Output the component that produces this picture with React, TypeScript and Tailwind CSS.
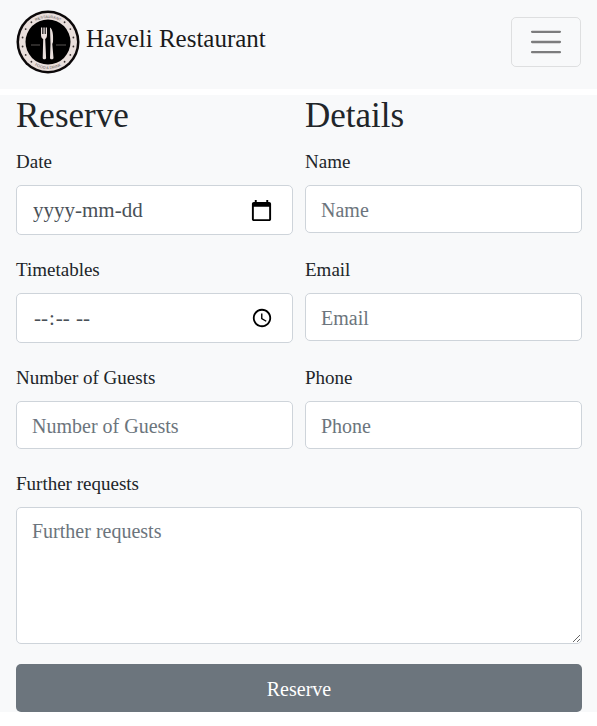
import type { ReactNode } from 'react';

const control =
  'w-full rounded-[5px] border border-[#ced4da] bg-white text-[#495057] placeholder:opacity-100';
const textControl = `${control} px-[15px] text-[20px] leading-[30px] placeholder:text-[#6c757d]`;
const pickerControl = `${control} h-[50px] px-4 text-[21px] leading-[30px] placeholder:text-[#495057]`;

function Logo() {
  const dots = [-50, -30, -10, 10, 30, 50].map((a) => (a * Math.PI) / 180);
  return (
    <svg viewBox="0 0 64 64" className="size-16 shrink-0" role="img" aria-label="Restaurant, food and drink">
      <defs>
        <path id="arc-top" d="M8 32a24 24 0 0 1 48 0" />
        <path id="arc-bottom" d="M5 32a27 27 0 0 0 54 0" />
      </defs>
      <circle cx="32" cy="32" r="31.5" fill="#0b0809" />
      <circle cx="32" cy="32" r="29" fill="#e9dfdc" />
      <circle cx="32" cy="32" r="22.5" fill="#000" />
      {dots.map((a) => (
        <g key={a} fill="#3a3433">
          <circle cx={32 + 25.8 * Math.cos(a)} cy={32 + 25.8 * Math.sin(a)} r="0.9" />
          <circle cx={32 - 25.8 * Math.cos(a)} cy={32 + 25.8 * Math.sin(a)} r="0.9" />
        </g>
      ))}
      <g fill="#5a5453" fontFamily="'Liberation Sans', Arial, sans-serif" fontSize="3.8" textAnchor="middle">
        <text>
          <textPath href="#arc-top" startOffset="50%">RESTAURANT</textPath>
        </text>
        <text>
          <textPath href="#arc-bottom" startOffset="50%">FOOD &amp; DRINK</textPath>
        </text>
      </g>
      <path d="M15 35h9M40 35h10" stroke="#5b5655" strokeWidth="1.2" />
      <g fill="#e9dfdc">
        <path d="M25 17.5H26V24H26.7V17.5H27.6V24H28.3V17.5H29.2V24H29.9V17.5H31V25C31 27.5 30 28.3 29.2 29L30.1 48C30.1 49.7 26.7 49.7 26.7 48L27.2 29C26 28.3 25 27.5 25 25Z" />
        <path d="M34 17.5C36.5 19 37.5 24 37 32L36.3 34L37.5 48C37.5 49.7 34 49.7 34 48L34.5 34Z" />
      </g>
    </svg>
  );
}

function Field({ id, label, children }: { id: string; label: string; children: ReactNode }) {
  return (
    <div className="flex min-w-0 flex-col gap-2">
      <label htmlFor={id} className="text-[19px] leading-[30px]">
        {label}
      </label>
      {children}
    </div>
  );
}

export default function App() {
  return (
    <div className="bg-white font-['Liberation_Serif','Times_New_Roman',serif] text-[#212529]">
      <nav className="mb-1.5 flex items-center justify-between bg-[#f8f9fa] px-4 pt-2.5 pb-[15px]">
        <a href="#" className="flex items-center gap-1.5 text-[#1a1a1b]">
          <Logo />
          <span className="pb-1.5 text-[25px] leading-[38px]">Haveli Restaurant</span>
        </a>
        <button
          type="button"
          aria-label="Toggle navigation"
          className="flex h-[50px] w-[70px] items-center justify-center rounded-[5px] border border-black/10"
        >
          <svg viewBox="0 0 30 30" className="size-[38px]" stroke="rgba(0,0,0,0.5)" strokeWidth="1.8" strokeLinecap="round">
            <path d="M4 7h22M4 15h22M4 23h22" />
          </svg>
        </button>
      </nav>

      <form className="bg-[#f8f9fa] pr-[15px] pl-4">
        <div className="mb-2.5 grid grid-cols-2 gap-x-3 text-[35px] leading-[42px]">
          <h2>Reserve</h2>
          <h2>Details</h2>
        </div>

        <div className="grid grid-cols-2 gap-x-3 gap-y-5">
          <Field id="date" label="Date">
            <div className="relative">
              <input
                id="date"
                type="text"
                inputMode="numeric"
                placeholder="yyyy-mm-dd"
                className={pickerControl}
              />
              <button type="button" aria-label="Choose date" className="absolute inset-y-0 right-5 flex items-center">
                <svg viewBox="0 0 24 24" className="size-[23px]" fill="#000">
                  <path d="M20 3h-1V1h-2v2H7V1H5v2H4c-1.1 0-2 .9-2 2v16c0 1.1.9 2 2 2h16c1.1 0 2-.9 2-2V5c0-1.1-.9-2-2-2zm0 18H4V8h16v13z" />
                </svg>
              </button>
            </div>
          </Field>
          <Field id="name" label="Name">
            <input id="name" type="text" placeholder="Name" className={`${textControl} h-12 pt-0.5`} />
          </Field>
          <Field id="time" label="Timetables">
            <input id="time" type="time" className={pickerControl} />
          </Field>
          <Field id="email" label="Email">
            <input id="email" type="email" placeholder="Email" className={`${textControl} h-12 pt-0.5`} />
          </Field>
          <Field id="guests" label="Number of Guests">
            <input id="guests" type="number" placeholder="Number of Guests" className={`${textControl} h-12 pt-0.5`} />
          </Field>
          <Field id="phone" label="Phone">
            <input id="phone" type="tel" placeholder="Phone" className={`${textControl} h-12 pt-0.5`} />
          </Field>
          <div className="col-span-2">
            <Field id="requests" label="Further requests">
              <textarea id="requests" placeholder="Further requests" className={`${textControl} block h-[137px] resize py-2`} />
            </Field>
          </div>
          <button
            type="submit"
            className="col-span-2 h-12 rounded-[5px] bg-[#6c757d] pt-0.5 text-[20px] leading-[30px] text-white"
          >
            Reserve
          </button>
        </div>
      </form>
    </div>
  );
}
